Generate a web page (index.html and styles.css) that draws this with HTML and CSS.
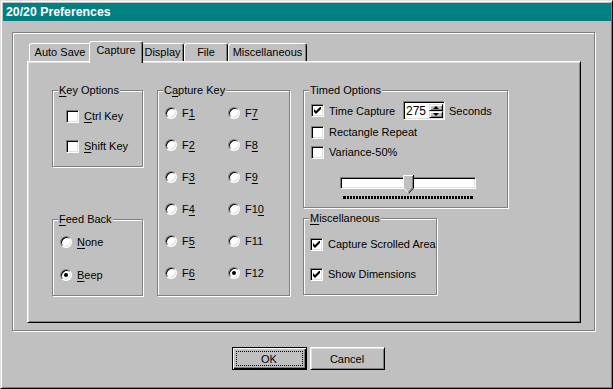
FILE: index.html
```html
<!DOCTYPE html>
<html lang="en">
<head>
    <meta charset="UTF-8">
    <title>20/20 Preferences</title>
    <link rel="stylesheet" href="styles.css">
</head>
<body>
    <div class="window">
        <div class="titlebar">20/20 Preferences</div>

        <div class="frame">
            <div class="tabs">
                <div class="tab tab-autosave">Auto Save</div>
                <div class="tab tab-capture active">Capture</div>
                <div class="tab tab-display">Display</div>
                <div class="tab tab-file">File</div>
                <div class="tab tab-misc">Miscellaneous</div>
            </div>

            <div class="panel">
                <div class="col">
                    <div class="group group-keys">
                        <div class="group-title"><u>K</u>ey Options</div>
                        <div class="group-body">
                            <div class="option"><span class="check"></span><span><u>C</u>trl Key</span></div>
                            <div class="option"><span class="check"></span><span><u>S</u>hift Key</span></div>
                        </div>
                    </div>

                    <div class="group group-feedback">
                        <div class="group-title"><u>F</u>eed Back</div>
                        <div class="group-body">
                            <div class="option"><span class="radio"></span><span><u>N</u>one</span></div>
                            <div class="option"><span class="radio checked"></span><span><u>B</u>eep</span></div>
                        </div>
                    </div>
                </div>

                <div class="group group-capture">
                    <div class="group-title">C<u>a</u>pture Key</div>
                    <div class="group-body keygrid">
                        <div class="option"><span class="radio"></span><span>F<u>1</u></span></div>
                        <div class="option"><span class="radio"></span><span>F<u>7</u></span></div>
                        <div class="option"><span class="radio"></span><span>F<u>2</u></span></div>
                        <div class="option"><span class="radio"></span><span>F<u>8</u></span></div>
                        <div class="option"><span class="radio"></span><span>F<u>3</u></span></div>
                        <div class="option"><span class="radio"></span><span>F<u>9</u></span></div>
                        <div class="option"><span class="radio"></span><span>F<u>4</u></span></div>
                        <div class="option"><span class="radio"></span><span>F1<u>0</u></span></div>
                        <div class="option"><span class="radio"></span><span>F<u>5</u></span></div>
                        <div class="option"><span class="radio"></span><span>F11</span></div>
                        <div class="option"><span class="radio"></span><span>F<u>6</u></span></div>
                        <div class="option"><span class="radio checked"></span><span>F12</span></div>
                    </div>
                </div>

                <div class="col col-right">
                    <div class="group group-timed">
                        <div class="group-title">Timed Options</div>
                        <div class="group-body">
                            <div class="option option-tall">
                                <span class="check checked"><svg width="7" height="7" viewBox="0 0 7 7"><polygon points="0,2 2,4 6,0 7,0 7,2 2,7 0,5" fill="#000"/></svg></span>
                                <span class="time-label">Time Capture</span>
                                <span class="spinner">
                                    <span class="spinner-value">275</span>
                                    <span class="spinner-buttons">
                                        <span class="spin-btn spin-up"></span>
                                        <span class="spin-btn spin-down"></span>
                                    </span>
                                </span>
                                <span class="seconds">Seconds</span>
                            </div>
                            <div class="option"><span class="check"></span><span>Rectangle Repeat</span></div>
                            <div class="option"><span class="check"></span><span>Variance-50%</span></div>

                            <div class="slider">
                                <div class="slider-track"></div>
                                <svg class="slider-thumb" width="11" height="19" viewBox="0 0 11 19">
                                    <polygon points="0,0 11,0 11,13 5.5,18.5 0,13" fill="#c0c0c0"/>
                                    <polyline points="0.5,13 0.5,0.5 10,0.5" fill="none" stroke="#fff"/>
                                    <polyline points="10.5,0 10.5,13 5.5,18.3" fill="none" stroke="#000"/>
                                    <polyline points="9.5,1 9.5,12.6 5.5,17" fill="none" stroke="#808080"/>
                                    <polyline points="0.8,13.2 5,17.6" fill="none" stroke="#fff"/>
                                </svg>
                                <div class="slider-ticks"></div>
                            </div>
                        </div>
                    </div>

                    <div class="group group-misc">
                        <div class="group-title"><u>M</u>iscellaneous</div>
                        <div class="group-body">
                            <div class="option"><span class="check checked"><svg width="7" height="7" viewBox="0 0 7 7"><polygon points="0,2 2,4 6,0 7,0 7,2 2,7 0,5" fill="#000"/></svg></span><span>Capture Scrolled Area</span></div>
                            <div class="option"><span class="check checked"><svg width="7" height="7" viewBox="0 0 7 7"><polygon points="0,2 2,4 6,0 7,0 7,2 2,7 0,5" fill="#000"/></svg></span><span>Show Dimensions</span></div>
                        </div>
                    </div>
                </div>
            </div>
        </div>

        <div class="buttons">
            <button class="btn btn-default"><span class="focus">OK</span></button>
            <button class="btn">Cancel</button>
        </div>
    </div>
</body>
</html>
```

FILE: styles.css
```css
* {
    box-sizing: border-box;
}
body {
    margin: 0;
    font-family: "Liberation Sans", Arial, sans-serif;
    font-size: 11px;
    color: #000;
    background: #c0c0c0;
}
u {
    text-decoration-thickness: 1px;
    text-underline-offset: 2px;
}
.window {
    width: 613px;
    height: 389px;
    padding: 2px 1px 0 2px;
    background: #c0c0c0;
    border: 1px solid;
    border-color: #dfdfdf #000 #000 #dfdfdf;
    box-shadow: inset 1px 1px #fff, inset -1px -1px #808080;
}
.titlebar {
    height: 18px;
    padding-left: 3px;
    line-height: 18px;
    background: #008080;
    color: #fff;
    font-weight: bold;
    font-size: 12.3px;
}

/* etched frame round the tab control */
.frame {
    width: 583px;
    height: 299px;
    margin: 11px 0 0 9px;
    padding: 8px 13px 7px 14px;
    border: 1px solid #808080;
    box-shadow: inset 1px 1px #fff, 1px 1px #fff;
}
.tabs {
    display: flex;
    align-items: flex-end;
    height: 20px;
    padding-left: 2px;
}
.tab {
    height: 18px;
    line-height: 16px;
    text-align: center;
    border: 1px solid;
    border-bottom: none;
    border-color: #fff #000 transparent #fff;
    border-radius: 3px 3px 0 0;
    box-shadow: inset -1px 0 #808080;
}
.tab-autosave { width: 62px; }
.tab-capture { width: 54px; }
.tab-display { width: 43px; }
.tab-file { width: 44px; }
.tab-misc { width: 79px; }
.tab.active {
    position: relative;
    z-index: 1;
    height: 22px;
    margin: 0 -2px -2px;
    padding-bottom: 3px;
    line-height: 17px;
    background: #c0c0c0;
}
.panel {
    display: flex;
    align-items: flex-start;
    height: 262px;
    padding: 28px 0 0 24px;
    border: 1px solid;
    border-color: #fff #000 #000 #fff;
    box-shadow: inset 1px 1px #dfdfdf, inset -1px -1px #808080;
}
.col {
    display: flex;
    flex-direction: column;
}
.col-right {
    margin-left: 13px;
}

/* group boxes */
.group {
    display: flex;
    flex-direction: column;
    border: 1px solid #808080;
    box-shadow: inset 1px 1px #fff, 1px 1px #fff;
}
.group-title {
    align-self: flex-start;
    height: 14px;
    margin: -8px 0 -6px 5px;
    padding: 0 1px;
    line-height: 14px;
    background: #c0c0c0;
}
.group-body {
    display: flex;
    flex-direction: column;
}
.group-keys {
    width: 91px;
    height: 77px;
}
.group-keys .group-body {
    padding: 17px 0 0 13px;
    gap: 14px;
}
.group-feedback {
    width: 91px;
    height: 77px;
    margin-top: 52px;
}
.group-feedback .group-body {
    padding: 14px 0 0 7px;
    gap: 17px;
}
.group-capture {
    width: 133px;
    height: 206px;
    margin-left: 14px;
}
.keygrid {
    display: grid;
    grid-template-columns: 63px auto;
    row-gap: 16px;
    padding: 14px 0 0 7px;
}
.group-timed {
    width: 205px;
    height: 118px;
}
.group-timed .group-body {
    padding: 10px 0 0 7px;
    gap: 4px;
}
.group-misc {
    width: 134px;
    height: 77px;
    margin-top: 10px;
}
.group-misc .group-body {
    padding: 17px 0 0 6px;
    gap: 14px;
}

/* check boxes and radio buttons */
.option {
    display: flex;
    align-items: center;
    gap: 5px;
    height: 16px;
    white-space: nowrap;
}
.option-tall {
    height: 19px;
}
.check {
    display: flex;
    align-items: center;
    justify-content: center;
    flex: none;
    width: 13px;
    height: 13px;
    background: #fff;
    border: 1px solid;
    border-color: #808080 #fff #fff #808080;
    box-shadow: inset 1px 1px #000, inset -1px -1px #dfdfdf;
}
.radio {
    position: relative;
    flex: none;
    width: 12px;
    height: 12px;
    border-radius: 50%;
    background: #fff;
    border: 1px solid;
    border-color: #808080 #fff #fff #808080;
    box-shadow: inset 1px 1px #000, inset -1px -1px #dfdfdf;
}
.radio.checked::after {
    content: "";
    position: absolute;
    left: 3px;
    top: 3px;
    width: 4px;
    height: 4px;
    border-radius: 50%;
    background: #000;
}

/* spin box */
.time-label {
    width: 69px;
}
.spinner {
    display: flex;
    width: 42px;
    height: 19px;
    padding: 2px 1px 1px 2px;
    background: #fff;
    border: 1px solid;
    border-color: #808080 #fff #fff #808080;
    box-shadow: inset 1px 1px #000, inset -1px -1px #dfdfdf;
}
.spinner-value {
    flex: 1;
    font-size: 12px;
    line-height: 14px;
}
.spinner-buttons {
    display: flex;
    flex-direction: column;
    width: 14px;
}
.spin-btn {
    display: flex;
    align-items: center;
    justify-content: center;
    flex: 1;
    background: #c0c0c0;
    border: 1px solid;
    border-color: #dfdfdf #000 #000 #dfdfdf;
    box-shadow: inset 1px 1px #fff, inset -1px -1px #808080;
}
.spin-up::after,
.spin-down::after {
    content: "";
    border-left: 3px solid transparent;
    border-right: 3px solid transparent;
}
.spin-up::after {
    border-bottom: 3px solid #000;
}
.spin-down::after {
    border-top: 3px solid #000;
}
.seconds {
    margin-left: -1px;
}

/* track bar */
.slider {
    position: relative;
    width: 136px;
    height: 24px;
    margin: 11px 0 0 29px;
}
.slider-track {
    height: 12px;
    margin-top: 2px;
    background: #fff;
    border: 1px solid;
    border-color: #808080 #fff #fff #808080;
    box-shadow: inset 1px 1px #000, inset -1px -1px #dfdfdf;
}
.slider-thumb {
    position: absolute;
    left: 63px;
    top: 0;
}
.slider-ticks {
    width: 130px;
    height: 3px;
    margin: 7px 0 0 3px;
    background: repeating-linear-gradient(90deg, #000 0 2px, transparent 2px 3px);
    border-left: 1px solid #000;
    border-right: 1px solid #000;
}

/* dialog buttons */
.buttons {
    display: flex;
    justify-content: center;
    gap: 3px;
    margin-top: 16px;
    padding-left: 2px;
}
.btn {
    display: flex;
    align-items: center;
    justify-content: center;
    width: 75px;
    height: 23px;
    padding: 0;
    font: inherit;
    color: #000;
    background: #c0c0c0;
    border: 1px solid;
    border-color: #fff #000 #000 #fff;
    box-shadow: inset 1px 1px #dfdfdf, inset -1px -1px #808080;
}
.btn-default {
    padding: 3px;
    border-color: #000;
    box-shadow: inset 1px 1px #fff, inset -1px -1px #000, inset -2px -2px #808080;
}
.focus {
    display: flex;
    align-items: center;
    justify-content: center;
    width: 100%;
    height: 100%;
    border: 1px dotted #000;
}
```
